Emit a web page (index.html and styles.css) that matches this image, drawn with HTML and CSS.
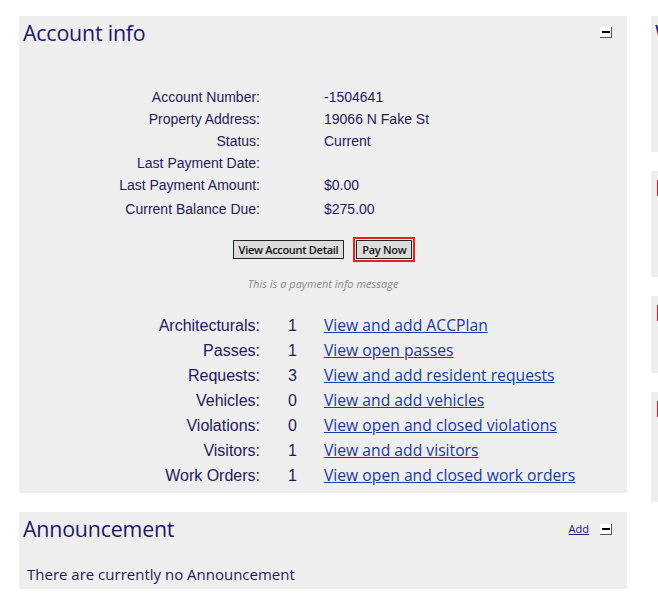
FILE: index.html
```html
<!DOCTYPE html>
<html lang="en">
<head>
<meta charset="utf-8">
<title>Account info</title>
<link rel="stylesheet" href="styles.css">
</head>
<body>
<div class="page">
  <main class="main-col">
    <section class="panel account">
      <header class="panel-head">
        <h2 class="panel-title">Account info</h2>
        <div class="panel-tools">
          <button class="collapse" aria-label="Collapse"><span class="bar"></span></button>
        </div>
      </header>
      <div class="info-grid">
        <div class="lbl">Account Number:</div><div class="val">-1504641</div>
        <div class="lbl">Property Address:</div><div class="val">19066 N Fake St</div>
        <div class="lbl">Status:</div><div class="val">Current</div>
        <div class="lbl">Last Payment Date:</div><div class="val"></div>
        <div class="lbl">Last Payment Amount:</div><div class="val">$0.00</div>
        <div class="lbl tall">Current Balance Due:</div><div class="val tall">$275.00</div>
      </div>
      <div class="actions">
        <button class="btn">View Account Detail</button>
        <button class="btn focused">Pay Now</button>
      </div>
      <p class="info-msg">This is a payment info message</p>
      <div class="stats-grid">
        <div class="s-lbl">Architecturals:</div><div class="s-num">1</div><div class="s-link"><a href="#">View and add ACCPlan</a></div>
        <div class="s-lbl">Passes:</div><div class="s-num">1</div><div class="s-link"><a href="#">View open passes</a></div>
        <div class="s-lbl">Requests:</div><div class="s-num">3</div><div class="s-link"><a href="#">View and add resident requests</a></div>
        <div class="s-lbl">Vehicles:</div><div class="s-num">0</div><div class="s-link"><a href="#">View and add vehicles</a></div>
        <div class="s-lbl">Violations:</div><div class="s-num">0</div><div class="s-link"><a href="#">View open and closed violations</a></div>
        <div class="s-lbl">Visitors:</div><div class="s-num">1</div><div class="s-link"><a href="#">View and add visitors</a></div>
        <div class="s-lbl">Work Orders:</div><div class="s-num">1</div><div class="s-link"><a href="#">View open and closed work orders</a></div>
      </div>
    </section>
    <section class="panel announce">
      <header class="panel-head">
        <h2 class="panel-title">Announcement</h2>
        <div class="panel-tools">
          <a href="#" class="add-link">Add</a>
          <button class="collapse" aria-label="Collapse"><span class="bar"></span></button>
        </div>
      </header>
      <p class="announce-text">There are currently no Announcement</p>
    </section>
  </main>
  <aside class="side-col">
    <section class="side-panel p1"><h2 class="side-title navy">Welcome</h2></section>
    <section class="side-panel p2"><h2 class="side-title purple">Documents</h2></section>
    <section class="side-panel p3"><h2 class="side-title purple">Links</h2></section>
    <section class="side-panel p4"><h2 class="side-title purple">Events</h2></section>
  </aside>
</div>
</body>
</html>
```

FILE: styles.css
```css
html, body {
  margin: 0;
  padding: 0;
  background: #ffffff;
  overflow: hidden;
}
body {
  font-family: "Liberation Sans", Arial, sans-serif;
  color: #1e1a5c;
}
.page {
  display: flex;
  gap: 24px;
  padding: 16px 0 0 19px;
  width: 1000px;
}
.main-col {
  width: 608px;
  display: flex;
  flex-direction: column;
  gap: 19px;
}
.panel {
  background: #eeeeee;
  padding: 0 4px;
}
.account {
  height: 477px;
  box-sizing: border-box;
}
.announce {
  height: 77px;
  box-sizing: border-box;
}
.panel-head {
  display: flex;
  justify-content: space-between;
  align-items: flex-start;
  height: 36px;
}
.panel-title {
  margin: 0;
  padding-top: 3px;
  font-family: "Open Sans", sans-serif;
  font-weight: 400;
  font-size: 21.4px;
  line-height: 27px;
  color: #1b1866;
  letter-spacing: -0.2px;
}
.panel-tools {
  display: flex;
  align-items: center;
  gap: 11px;
  padding-top: 11px;
  padding-right: 11px;
}
.collapse {
  width: 12px;
  height: 11px;
  padding: 0;
  margin: 0;
  border: 0;
  border-right: 1px solid #555;
  border-bottom: 1px solid #555;
  background: #ffffff;
  display: flex;
  align-items: center;
  justify-content: center;
  box-sizing: border-box;
}
.collapse .bar {
  display: block;
  width: 8px;
  height: 2px;
  background: #000;
}
.add-link {
  font-family: "Open Sans", sans-serif;
  font-size: 11px;
  color: #1b1866;
  text-decoration: underline;
  line-height: 12px;
}
.info-grid {
  display: grid;
  grid-template-columns: 237px auto;
  column-gap: 64px;
  margin-top: 34px;
  font-size: 14px;
  line-height: 22px;
  color: #1e1a5c;
}
.info-grid .lbl {
  text-align: right;
}
.info-grid .tall {
  line-height: 26px;
}
.actions {
  display: flex;
  justify-content: center;
  gap: 12px;
  margin-top: 18px;
  padding-right: 1px;
}
.btn {
  font-family: "Open Sans", sans-serif;
  font-weight: 600;
  font-size: 11px;
  line-height: 16px;
  padding: 0 5px;
  height: 19px;
  background: #dcdcdc;
  border: 1px solid #222;
  color: #111;
  border-radius: 0;
  letter-spacing: -0.3px;
}
.btn.focused {
  outline: 2px solid #e2231f;
  outline-offset: 1px;
}
.info-msg {
  margin: 18px 0 0;
  text-align: center;
  font-family: "Open Sans", sans-serif;
  font-style: italic;
  font-size: 11px;
  line-height: 14px;
  color: #888888;
}
.stats-grid {
  display: grid;
  grid-template-columns: 237px 64px auto;
  margin-top: 22px;
  font-size: 16px;
  line-height: 25px;
  color: #1e1a5c;
}
.s-lbl {
  text-align: right;
}
.s-num {
  padding-left: 28px;
}
.s-link a {
  font-family: "Open Sans", sans-serif;
  font-size: 15.7px;
  color: #1a3aa0;
  text-decoration: underline;
}
.announce-text {
  margin: 16px 0 0 4px;
  font-family: "Open Sans", sans-serif;
  font-size: 15px;
  line-height: 20px;
  color: #1e1a5c;
}
.side-col {
  width: 300px;
  display: flex;
  flex-direction: column;
  gap: 19px;
}
.side-panel {
  background: #eeeeee;
  padding: 0 4px;
}
.p1 { height: 136px; }
.p2 { height: 106px; }
.p3 { height: 77px; }
.p4 { height: 110px; }
.side-title {
  margin: 0;
  padding-top: 3px;
  font-family: "Open Sans", sans-serif;
  font-weight: 400;
  font-size: 21.4px;
  line-height: 27px;
}
.side-title.navy { color: #1b1866; }
.side-title.purple { color: #6a1660; }
```
